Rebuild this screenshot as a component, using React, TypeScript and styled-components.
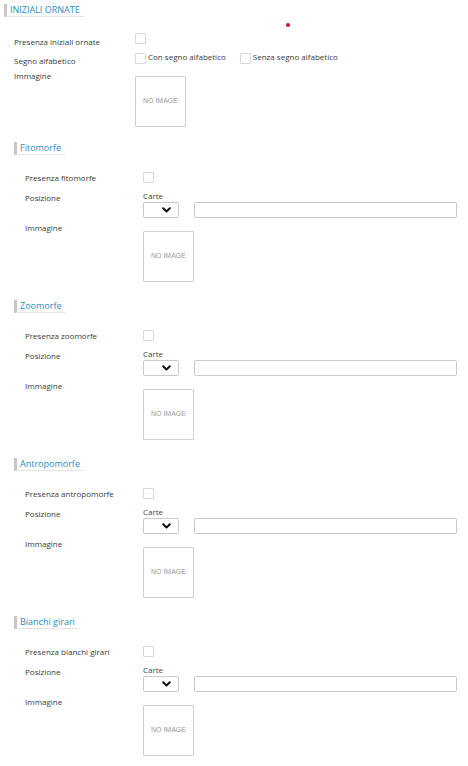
import React from "react";
import styled, { createGlobalStyle } from "styled-components";

const GlobalStyle = createGlobalStyle`
  html, body {
    margin: 0;
    padding: 0;
    background: #ffffff;
  }
  body {
    font-family: "Open Sans", "Liberation Sans", sans-serif;
    color: #3a3a3a;
  }
`;

const Page = styled.div`
  position: relative;
  width: 468px;
  height: 766px;
  overflow: hidden;
  padding-top: 4px;
  box-sizing: border-box;
`;

const RequiredDot = styled.span`
  position: absolute;
  left: 286px;
  top: 23px;
  width: 4px;
  height: 4px;
  border-radius: 50%;
  background: #d0102a;
`;

const Section = styled.section<{ $indent: number; $top: number }>`
  margin-left: ${(p) => p.$indent}px;
  margin-top: ${(p) => p.$top}px;
`;

const Heading = styled.h3`
  display: block;
  width: fit-content;
  margin: 0;
  padding: 0 4px 0 3px;
  font-size: 9px;
  font-weight: 400;
  line-height: 12px;
  color: #2b8cc1;
  border-left: 3px solid #c6c6c6;
  border-bottom: 1px solid #e4e4e4;
`;

const Row = styled.div<{ $top: number }>`
  display: flex;
  align-items: flex-start;
  margin-top: ${(p) => p.$top}px;
`;

const Label = styled.div<{ $width: number; $pad: number; $offset?: number }>`
  flex: 0 0 ${(p) => p.$width}px;
  box-sizing: border-box;
  padding-left: ${(p) => p.$pad}px;
  padding-top: ${(p) => p.$offset ?? 0}px;
  font-size: 8px;
  line-height: 11px;
  color: #3a3a3a;
  white-space: nowrap;
`;

const Value = styled.div`
  flex: 1;
  min-width: 0;
  display: flex;
  flex-direction: column;
  align-items: flex-start;
`;

const Checkbox = styled.span<{ $top?: number }>`
  display: block;
  flex: none;
  width: 11px;
  height: 11px;
  box-sizing: border-box;
  margin-top: ${(p) => p.$top ?? 0}px;
  border: 1px solid #d8d8d8;
  border-radius: 1px;
  background: #ffffff;
`;

const Options = styled.div`
  display: flex;
  align-items: flex-start;
`;

const Option = styled.label`
  display: flex;
  align-items: flex-start;
  gap: 2px;
  margin-right: 14px;
  font-size: 8px;
  line-height: 11px;
  color: #3a3a3a;
  white-space: nowrap;
`;

const SubLabel = styled.div`
  font-size: 8px;
  line-height: 11px;
  color: #444444;
`;

const Controls = styled.div`
  align-self: stretch;
  display: flex;
  gap: 15px;
  margin-top: 1px;
  padding-right: 11px;
`;

const SelectBox = styled.div`
  flex: 0 0 36px;
  height: 16px;
  box-sizing: border-box;
  display: flex;
  align-items: center;
  justify-content: flex-end;
  padding-right: 7px;
  border: 1px solid #cacaca;
  border-radius: 2px;
  background: #ffffff;
`;

const TextInput = styled.input`
  flex: 1;
  min-width: 0;
  height: 16px;
  box-sizing: border-box;
  margin: 0;
  padding: 0 4px;
  border: 1px solid #cacaca;
  border-radius: 2px;
  font-family: "Open Sans", sans-serif;
  font-size: 8px;
  outline: none;
`;

const ImageBox = styled.div<{ $top: number }>`
  width: 51px;
  height: 51px;
  box-sizing: border-box;
  margin-top: ${(p) => p.$top}px;
  display: flex;
  align-items: center;
  justify-content: center;
  padding-bottom: 2px;
  border: 1px solid #cfcfcf;
  border-radius: 1px;
  font-family: "Liberation Sans", Arial, sans-serif;
  font-size: 7px;
  color: #9a9a9a;
  white-space: nowrap;
`;

const Chevron = () => (
  <svg width="9" height="6" viewBox="0 0 9 6">
    <path d="M1.2 1.2 L4.5 4.5 L7.8 1.2" fill="none" stroke="#111" strokeWidth="2" strokeLinecap="round" strokeLinejoin="round" />
  </svg>
);

const subSections = [
  { title: "Fitomorfe", presence: "Presenza fitomorfe" },
  { title: "Zoomorfe", presence: "Presenza zoomorfe" },
  { title: "Antropomorfe", presence: "Presenza antropomorfe" },
  { title: "Bianchi girari", presence: "Presenza bianchi girari" },
];

export default function App() {
  return (
    <Page>
      <GlobalStyle />
      <RequiredDot />

      <Section $indent={4} $top={0}>
        <Heading>INIZIALI ORNATE</Heading>
        <Row $top={16}>
          <Label $width={131} $pad={10} $offset={3}>Presenza iniziali ornate</Label>
          <Value>
            <Checkbox />
          </Value>
        </Row>
        <Row $top={4}>
          <Label $width={131} $pad={10} $offset={3.5}>Segno alfabetico</Label>
          <Value>
            <Options>
              <Option>
                <Checkbox $top={2} />
                Con segno alfabetico
              </Option>
              <Option>
                <Checkbox $top={2} />
                Senza segno alfabetico
              </Option>
            </Options>
          </Value>
        </Row>
        <Row $top={0}>
          <Label $width={131} $pad={10} $offset={4}>Immagine</Label>
          <Value>
            <ImageBox $top={10.5}>NO IMAGE</ImageBox>
          </Value>
        </Row>
      </Section>

      {subSections.map((s, i) => (
        <Section key={s.title} $indent={14} $top={i === 0 ? 15 : 18}>
          <Heading>{s.title}</Heading>
          <Row $top={17}>
            <Label $width={129} $pad={11}>{s.presence}</Label>
            <Value>
              <Checkbox />
            </Value>
          </Row>
          <Row $top={7}>
            <Label $width={129} $pad={11} $offset={2}>Posizione</Label>
            <Value>
              <SubLabel>Carte</SubLabel>
              <Controls>
                <SelectBox>
                  <Chevron />
                </SelectBox>
                <TextInput type="text" />
              </Controls>
            </Value>
          </Row>
          <Row $top={4}>
            <Label $width={129} $pad={11}>Immagine</Label>
            <Value>
              <ImageBox $top={9}>NO IMAGE</ImageBox>
            </Value>
          </Row>
        </Section>
      ))}
    </Page>
  );
}
